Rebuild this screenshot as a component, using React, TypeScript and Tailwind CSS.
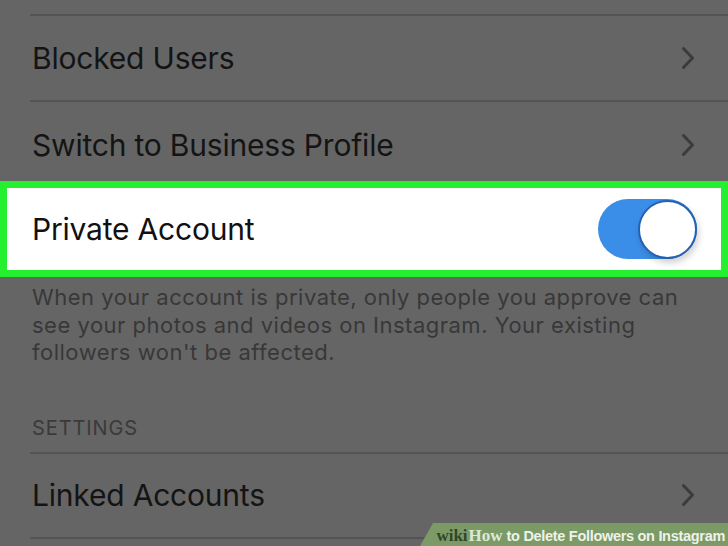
import { ReactNode } from "react";

const font = { fontFamily: "Inter, Roboto, sans-serif" };

function Chevron() {
  return (
    <svg width="14" height="24" viewBox="0 0 14 24" className="shrink-0">
      <path d="M2.5 2.5 L11.5 12 L2.5 21.5" fill="none" stroke="#3b3b3b" strokeWidth="3" strokeLinecap="round" strokeLinejoin="round" />
    </svg>
  );
}

function Row({ children, height, pad = "" }: { children: ReactNode; height: string; pad?: string }) {
  return (
    <div className={`ml-[30px] border-t-2 border-[#545454] ${height} flex items-center justify-between pr-[33px] ${pad}`}>
      <span className="pl-[2px] text-[30px] text-[#141414] leading-none tracking-[-0.2px]">{children}</span>
      <Chevron />
    </div>
  );
}

export default function App() {
  return (
    <div className="relative w-[728px] h-[546px] overflow-hidden bg-[#656565]" style={font}>
      <div className="h-[14px]" />
      <Row height="h-[86px]">Blocked Users</Row>
      <Row height="h-[81px]" pad="pt-[6px]">Switch to Business Profile</Row>

      {/* highlighted row */}
      <div className="h-[96px] border-[7px] border-[#25f02f] bg-white flex items-center justify-between pl-[25px] pr-[24px]">
        <span className="text-[30px] text-[#111] leading-none tracking-[-0.2px]">Private Account</span>
        <div className="w-[99px] h-[60px] rounded-full bg-[#3a8ee8] flex justify-end items-center">
          <div className="w-[59px] h-[59px] rounded-full bg-white border-2 border-[#2561b3] shadow-[2px_4px_6px_rgba(0,0,0,0.18)]" />
        </div>
      </div>

      <p className="mt-[7px] px-[32px] text-[22px] leading-[27.5px] text-[#383838] tracking-[0.5px]">
        When your account is private, only people you approve can see your photos and videos on Instagram. Your existing followers won't be affected.
      </p>

      <div className="mt-[51px] px-[32px] text-[20px] leading-[20px] text-[#3a3a3a] tracking-[0.9px]">SETTINGS</div>

      <div className="mt-[14px]">
        <Row height="h-[85px]">Linked Accounts</Row>
        <div className="ml-[30px] border-t-2 border-[#545454]" />
      </div>

      {/* wikiHow watermark */}
      <div className="absolute right-0 bottom-0 w-[308px] h-[23px] bg-[#7b9a66] [clip-path:polygon(13px_0,100%_0,100%_100%,0_100%)] flex items-baseline justify-end pr-[3px] pt-[4px]">
        <span className="text-[17px] font-bold text-[#34452a] leading-none" style={{ fontFamily: "'Liberation Serif', serif" }}>wiki</span>
        <span className="text-[17px] font-bold text-[#dfe8d6] leading-none ml-[1px]" style={{ fontFamily: "'Liberation Serif', serif" }}>How</span>
        <span className="text-[14.5px] font-bold text-[#eef2ea] leading-none ml-[4px] tracking-[-0.3px]" style={{ fontFamily: "'Liberation Sans', sans-serif" }}>
          to Delete Followers on Instagram
        </span>
      </div>
    </div>
  );
}
